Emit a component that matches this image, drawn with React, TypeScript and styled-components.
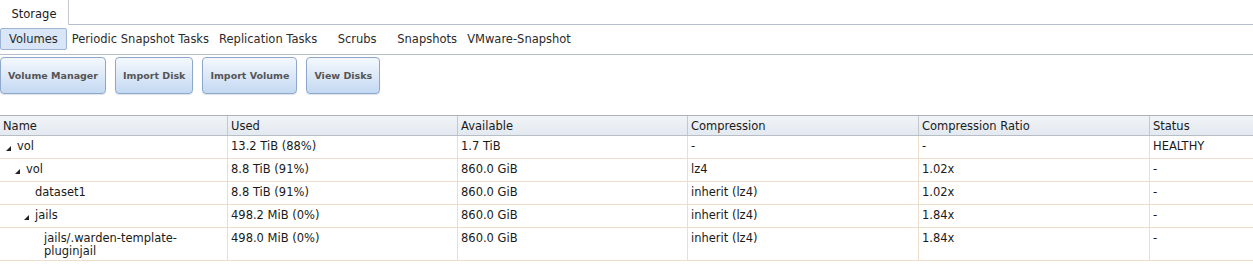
import React from "react";
import styled, { createGlobalStyle } from "styled-components";

const Global = createGlobalStyle`
  html, body { margin: 0; padding: 0; background: #fff; }
  body { font-family: "DejaVu Sans", Verdana, sans-serif; font-size: 11.5px; color: #1a1a1a; }
  * { box-sizing: border-box; }
`;

const Page = styled.div`
  width: 1253px;
  display: flex;
  flex-direction: column;
`;

const TabBar = styled.div`
  display: flex;
  height: 25px;
`;

const MainTab = styled.div`
  width: 69px;
  height: 25px;
  border-right: 1px solid #c6cacf;
  display: flex;
  align-items: center;
  justify-content: center;
  padding-top: 2px;
  color: #1a1a1a;
`;

const TabFill = styled.div`
  flex: 1;
  border-bottom: 1px solid #b7bdca;
`;

const SubTabs = styled.div`
  display: flex;
  align-items: center;
  height: 30px;
  border-bottom: 1px solid #b7bdca;
  padding-bottom: 2px;
`;

const SubTab = styled.div<{ $active?: boolean }>`
  height: 22px;
  display: flex;
  align-items: center;
  justify-content: center;
  color: #2a2a2a;
  padding: ${(p) => (p.$active ? "0 8px" : "0 5px")};
  min-width: ${(p) => (p.$active ? "auto" : "70px")};
  background: ${(p) => (p.$active ? "#d8e6f7" : "transparent")};
  border: ${(p) => (p.$active ? "1px solid #9db5d3" : "none")};
  border-radius: 2px;
`;

const Toolbar = styled.div`
  display: flex;
  gap: 9px;
  padding-top: 2px;
  height: 60px;
`;

const Button = styled.button`
  height: 37px;
  padding: 0 7px;
  border: 1px solid #8da8cb;
  border-radius: 4px;
  background: linear-gradient(to bottom, #f4f8fd 0%, #dfeaf8 45%, #c4d9f2 100%);
  box-shadow: 0 1px 1px rgba(120, 140, 170, 0.25);
  font-family: "DejaVu Sans", Verdana, sans-serif;
  font-weight: bold;
  font-size: 9.5px;
  color: #555;
  cursor: pointer;
`;

const Table = styled.div`
  display: flex;
  flex-direction: column;
  border-top: 1px solid #aeb2b8;
`;

const COLS = "228px 230px 230px 231px 231px 1fr";

const HeaderRow = styled.div`
  display: grid;
  grid-template-columns: ${COLS};
  background: linear-gradient(to bottom, #f1f4f7 0%, #e3e9f0 100%);
  border-bottom: 1px solid #b9bec4;
`;

const HeaderCell = styled.div`
  padding: 4px 3px 2px;
  line-height: 13px;
  border-right: 1px solid #c4c8ce;
  color: #1a1a1a;
  &:last-child { border-right: none; }
`;

const Row = styled.div`
  display: grid;
  grid-template-columns: ${COLS};
  border-bottom: 1px solid #efdccb;
`;

const Cell = styled.div`
  padding: 4px 3px 2px;
  line-height: 13px;
  min-height: 22px;
  border-right: 1px solid #efdccb;
  color: #1a1a1a;
  &:last-child { border-right: none; }
`;

const NameCell = styled(Cell)<{ $level: number }>`
  display: flex;
  align-items: flex-start;
  padding-left: ${(p) => 6 + p.$level * 9}px;
`;

const Expander = styled.span`
  width: 11px;
  flex: none;
  display: flex;
  align-items: flex-end;
  height: 11px;
`;

const NameText = styled.span`
  max-width: 140px;
`;

const Triangle = () => (
  <svg width="5" height="5" viewBox="0 0 5 5">
    <polygon points="5,0 5,5 0,5" fill="#222" />
  </svg>
);

type R = {
  name: React.ReactNode;
  level: number;
  expandable: boolean;
  used: string;
  avail: string;
  comp: string;
  ratio: string;
  status: string;
};

const rows: R[] = [
  { name: "vol", level: 0, expandable: true, used: "13.2 TiB (88%)", avail: "1.7 TiB", comp: "-", ratio: "-", status: "HEALTHY" },
  { name: "vol", level: 1, expandable: true, used: "8.8 TiB (91%)", avail: "860.0 GiB", comp: "lz4", ratio: "1.02x", status: "-" },
  { name: "dataset1", level: 2, expandable: false, used: "8.8 TiB (91%)", avail: "860.0 GiB", comp: "inherit (lz4)", ratio: "1.02x", status: "-" },
  { name: "jails", level: 2, expandable: true, used: "498.2 MiB (0%)", avail: "860.0 GiB", comp: "inherit (lz4)", ratio: "1.84x", status: "-" },
  {
    name: (
      <>
        jails/.warden-template-
        <br />
        pluginjail
      </>
    ),
    level: 3,
    expandable: false,
    used: "498.0 MiB (0%)",
    avail: "860.0 GiB",
    comp: "inherit (lz4)",
    ratio: "1.84x",
    status: "-",
  },
];

export default function App() {
  return (
    <Page>
      <Global />
      <TabBar>
        <MainTab>Storage</MainTab>
        <TabFill />
      </TabBar>
      <SubTabs>
        <SubTab $active>Volumes</SubTab>
        <SubTab>Periodic Snapshot Tasks</SubTab>
        <SubTab>Replication Tasks</SubTab>
        <SubTab>Scrubs</SubTab>
        <SubTab>Snapshots</SubTab>
        <SubTab>VMware-Snapshot</SubTab>
      </SubTabs>
      <Toolbar>
        <Button>Volume Manager</Button>
        <Button>Import Disk</Button>
        <Button>Import Volume</Button>
        <Button>View Disks</Button>
      </Toolbar>
      <Table>
        <HeaderRow>
          <HeaderCell>Name</HeaderCell>
          <HeaderCell>Used</HeaderCell>
          <HeaderCell>Available</HeaderCell>
          <HeaderCell>Compression</HeaderCell>
          <HeaderCell>Compression Ratio</HeaderCell>
          <HeaderCell>Status</HeaderCell>
        </HeaderRow>
        {rows.map((r, i) => (
          <Row key={i}>
            <NameCell $level={r.level}>
              <Expander>{r.expandable ? <Triangle /> : null}</Expander>
              <NameText>{r.name}</NameText>
            </NameCell>
            <Cell>{r.used}</Cell>
            <Cell>{r.avail}</Cell>
            <Cell>{r.comp}</Cell>
            <Cell>{r.ratio}</Cell>
            <Cell>{r.status}</Cell>
          </Row>
        ))}
      </Table>
    </Page>
  );
}
